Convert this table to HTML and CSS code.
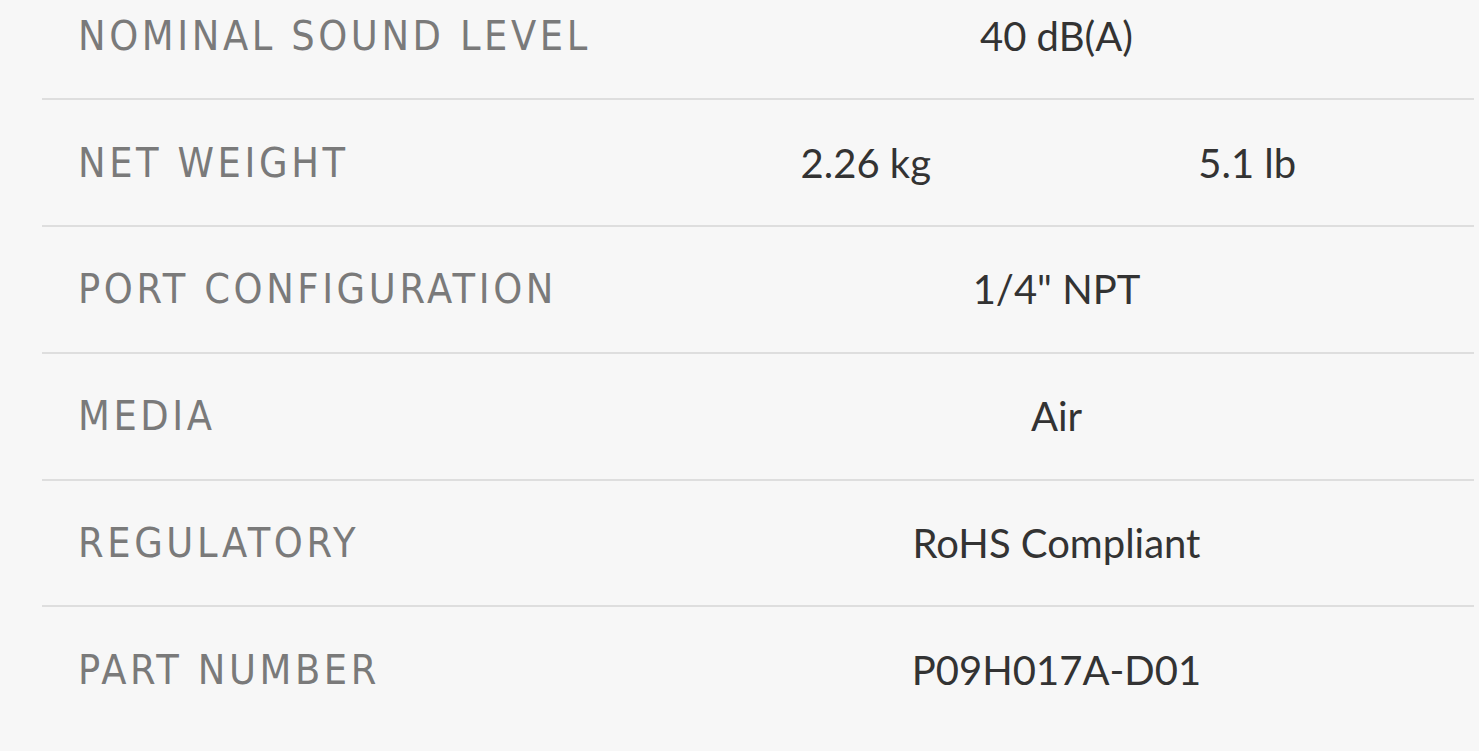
FILE: index.html
```html
<!DOCTYPE html>
<html lang="en">
<head>
<meta charset="utf-8">
<title>Specifications</title>
<link rel="stylesheet" href="styles.css">
</head>
<body>
<div class="specs">
  <div class="row">
    <div class="label">Nominal Sound Level</div>
    <div class="value span">40 dB(A)</div>
  </div>
  <div class="row">
    <div class="label">Net Weight</div>
    <div class="value">2.26 kg</div>
    <div class="value">5.1 lb</div>
  </div>
  <div class="row">
    <div class="label">Port Configuration</div>
    <div class="value span">1/4" NPT</div>
  </div>
  <div class="row">
    <div class="label">Media</div>
    <div class="value span">Air</div>
  </div>
  <div class="row">
    <div class="label">Regulatory</div>
    <div class="value span">RoHS Compliant</div>
  </div>
  <div class="row last">
    <div class="label">Part Number</div>
    <div class="value span">P09H017A-D01</div>
  </div>
</div>
</body>
</html>
```

FILE: styles.css
```css
html, body {
  margin: 0;
  padding: 0;
  background: #f7f7f7;
  overflow: hidden;
}
.specs {
  margin: -26.5px 5px 0 42px;
}
.row {
  display: grid;
  grid-template-columns: 597px 1fr 1fr;
  align-items: center;
  height: 124.75px;
  padding: 0 36px;
  border-bottom: 2px solid #dedede;
}
.row.last {
  border-bottom: none;
}
.label {
  font-family: "DejaVu Sans Condensed", "DejaVu Sans", sans-serif;
  font-stretch: condensed;
  font-size: 41px;
  letter-spacing: 3.6px;
  text-transform: uppercase;
  color: #7a7a7a;
  white-space: nowrap;
}
.value {
  font-family: Lato, "Noto Sans", sans-serif;
  font-size: 40px;
  color: #333333;
  text-align: center;
  white-space: nowrap;
}
.value.span {
  grid-column: 2 / 4;
}
```
